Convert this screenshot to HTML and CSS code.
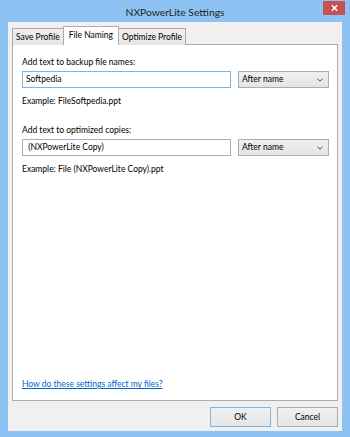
FILE: index.html
```html
<!DOCTYPE html>
<html lang="en">
<head>
  <meta charset="UTF-8">
  <title>NXPowerLite Settings</title>
  <link rel="stylesheet" href="styles.css">
</head>
<body>
  <div class="window">
    <div class="titlebar">
      <span></span>
      <div class="title">NXPowerLite Settings</div>
      <div class="btn-close">
        <svg width="7" height="6" viewBox="0 0 7 6"><path d="M0.8 0.3 L6.2 5.7 M6.2 0.3 L0.8 5.7" stroke="#fff" stroke-width="1.5"/></svg>
      </div>
    </div>

    <div class="client">
      <div class="tabs">
        <div class="tab">Save Profile</div>
        <div class="tab active">File Naming</div>
        <div class="tab">Optimize Profile</div>
      </div>

      <div class="panel">
        <div class="label">Add text to backup file names:</div>
        <div class="row">
          <div class="textbox focused">Softpedia</div>
          <div class="combo">
            <span>After name</span>
            <svg width="6" height="4" viewBox="0 0 6 4"><path d="M0.5 0.7 L3 3.2 L5.5 0.7" fill="none" stroke="#444" stroke-width="1"/></svg>
          </div>
        </div>
        <div class="example">Example: FileSoftpedia.ppt</div>

        <div class="label second">Add text to optimized copies:</div>
        <div class="row">
          <div class="textbox">&nbsp;(NXPowerLite Copy)</div>
          <div class="combo">
            <span>After name</span>
            <svg width="6" height="4" viewBox="0 0 6 4"><path d="M0.5 0.7 L3 3.2 L5.5 0.7" fill="none" stroke="#444" stroke-width="1"/></svg>
          </div>
        </div>
        <div class="example">Example: File (NXPowerLite Copy).ppt</div>

        <a class="help-link" href="#">How do these settings affect my files?</a>
      </div>

      <div class="buttons">
        <div class="btn default">OK</div>
        <div class="btn">Cancel</div>
      </div>
    </div>
  </div>
</body>
</html>
```

FILE: styles.css
```css
/***----BASIC----***/
body {
  margin: 0;
  font-family: Lato, 'Open Sans', sans-serif;
  font-size: 8.5px;
  color: #000;
}
.window {
  width: 350px;
  height: 437px;
  background: #8dc3f2;
  display: flex;
  flex-direction: column;
}

/***----Title Bar----***/
.titlebar {
  height: 22px;
  display: grid;
  grid-template-columns: 1fr auto 1fr;
  align-items: start;
}
.title {
  font-size: 10.3px;
  line-height: 24px;
  color: #1e1e1e;
}
.btn-close {
  justify-self: end;
  margin: 1px 5px 0 0;
  width: 22px;
  height: 14px;
  background: #c75050;
  display: flex;
  justify-content: center;
  align-items: center;
}

/***----Client----***/
.client {
  flex: 1;
  margin: 0 8px 6px;
  background: #f0f0f0;
  padding: 5px 4px 4px;
  display: flex;
  flex-direction: column;
}

/***----Tabs----***/
.tabs {
  display: flex;
  align-items: flex-end;
  height: 18px;
  margin-bottom: -1px;
  position: relative;
  z-index: 1;
}
.tab {
  height: 16px;
  line-height: 16px;
  padding: 0 3px;
  border: 1px solid #acacac;
  border-bottom: none;
  background: linear-gradient(#f0f0f0, #e5e5e5);
  margin-right: -1px;
}
.tab.active {
  height: 18px;
  line-height: 17px;
  background: #fff;
  padding: 0 5px;
  margin: 0 -1px 0 0;
}

/***----Panel----***/
.panel {
  flex: 1;
  background: #fff;
  border: 1px solid #acacac;
  padding: 9px 8px 8px 9px;
  display: flex;
  flex-direction: column;
}
.label {
  line-height: 16px;
  margin-bottom: 1px;
}
.label.second {
  margin-top: 13px;
}
.row {
  display: flex;
  gap: 7px;
}
.textbox {
  flex: 1;
  height: 17px;
  box-sizing: border-box;
  border: 1px solid #abadb3;
  padding: 0 3px;
  line-height: 15px;
}
.textbox.focused {
  border-color: #7eb4ea;
}
.combo {
  width: 91px;
  height: 17px;
  box-sizing: border-box;
  border: 1px solid #acacac;
  background: linear-gradient(#f0f0f0, #e5e5e5);
  padding: 0 5px 0 3px;
  line-height: 15px;
  display: flex;
  justify-content: space-between;
  align-items: center;
}
.example {
  line-height: 16px;
  margin-top: 5px;
}
.help-link {
  margin-top: auto;
  line-height: 16px;
  color: #0066cc;
  align-self: flex-start;
}

/***----Buttons----***/
.buttons {
  display: flex;
  justify-content: flex-end;
  gap: 6px;
  margin-top: 6px;
}
.btn {
  width: 61px;
  height: 20px;
  box-sizing: border-box;
  border: 1px solid #acacac;
  background: linear-gradient(#f0f0f0, #e5e5e5);
  text-align: center;
  line-height: 18px;
}
.btn.default {
  border-color: #7eb4ea;
}
```
